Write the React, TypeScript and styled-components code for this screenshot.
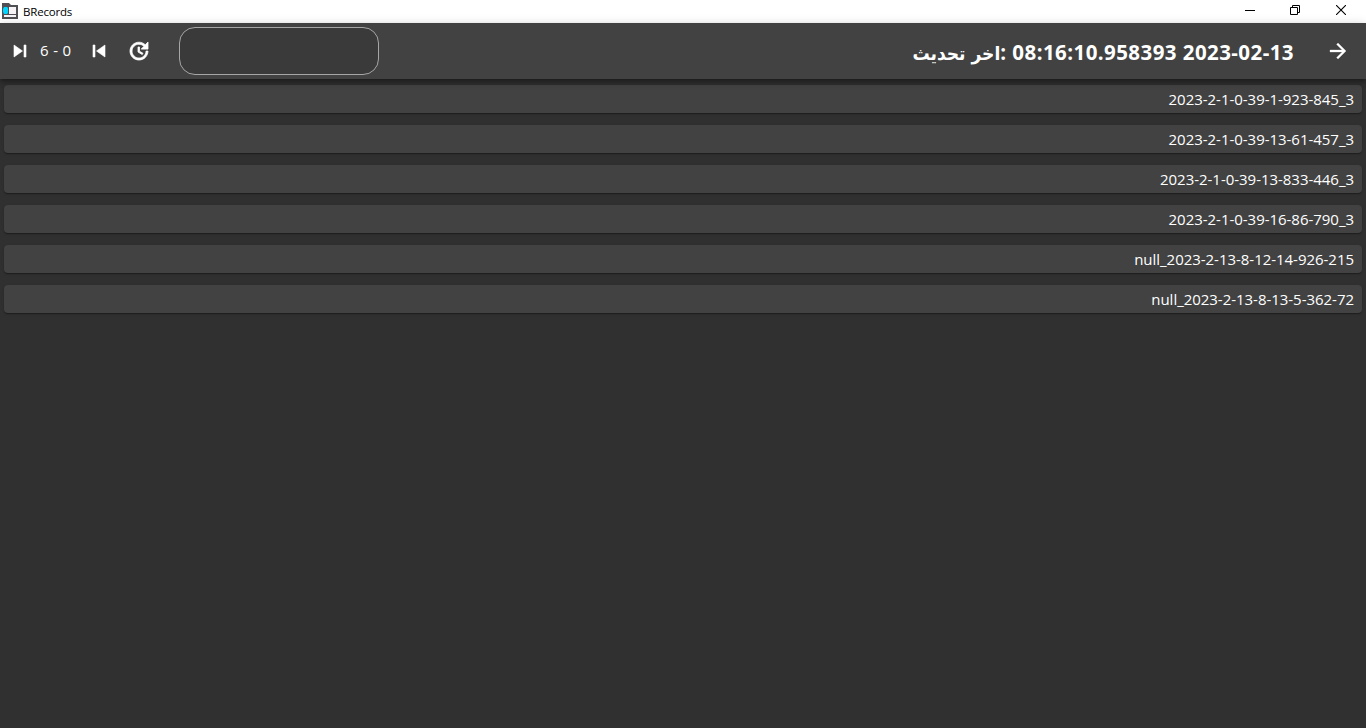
import React from "react";
import styled, { createGlobalStyle } from "styled-components";
import { MdArrowForward, MdSkipNext, MdSkipPrevious, MdUpdate } from "react-icons/md";

const GlobalStyle = createGlobalStyle`
  * { box-sizing: border-box; }
  body { margin: 0; background: #303030; overflow: hidden; }
`;

const Window = styled.div`
  display: flex;
  flex-direction: column;
  height: 100vh;
  color: #fff;
  background: #303030;
  font-family: "Open Sans", "Noto Sans", "DejaVu Sans", sans-serif;
`;

const TitleBar = styled.div`
  display: flex;
  align-items: center;
  flex: none;
  height: 23px;
  padding: 0 2px;
  background: #fff;
  color: #000;
`;

const AppIcon = styled.svg`
  display: block;
  width: 16px;
  height: 16px;
  margin-bottom: 1px;
`;

const Title = styled.span`
  flex: 1;
  margin-left: 5px;
  font-size: 11.5px;
  line-height: 23px;
  letter-spacing: -0.2px;
`;

const WindowButton = styled.button<{ $width: number }>`
  display: flex;
  align-items: center;
  justify-content: center;
  width: ${(p) => p.$width}px;
  height: 20px;
  margin: 0 0 3px;
  padding: 0;
  border: 0;
  background: none;
  color: #000;
`;

const AppBar = styled.header`
  display: flex;
  align-items: center;
  flex: none;
  height: 56px;
  padding: 0 16px 0 8px;
  background: #424242;
  box-shadow: 0 2px 4px -1px rgba(0, 0, 0, 0.3), 0 4px 5px rgba(0, 0, 0, 0.16),
    0 1px 10px rgba(0, 0, 0, 0.14);
  z-index: 1;
`;

const IconButton = styled.button<{ $gap?: number; $weight?: number }>`
  display: flex;
  width: 24px;
  height: 24px;
  margin: 0 0 0 ${(p) => p.$gap ?? 0}px;
  padding: 0;
  border: 0;
  background: none;
  color: #fff;
  font-size: 24px;

  path {
    stroke-width: ${(p) => p.$weight ?? 0};
  }

  path[fill="none"] {
    stroke: none;
  }
`;

const PageRange = styled.span`
  width: 31px;
  margin: 0 9px 3px 8px;
  font-size: 15px;
  line-height: 20px;
  word-spacing: 0.7px;
  white-space: nowrap;
`;

const SearchField = styled.input`
  width: 200px;
  height: 48px;
  margin-left: 28px;
  padding: 0 16px;
  border: 1px solid #a6a6a6;
  border-radius: 16px;
  outline: 0;
  background: #3a3a3a;
  color: #fff;
  font: inherit;
`;

const LastUpdate = styled.h1`
  display: flex;
  align-items: baseline;
  margin: 2px 32px 0 auto;
  font-size: 20.5px;
  font-weight: 700;
  line-height: 28px;
  white-space: pre;
`;

const ArabicLabel = styled.span`
  font-family: "DejaVu Sans Condensed", "DejaVu Sans", sans-serif;
  font-size: 19px;
`;

const Stamp = styled.span`
  letter-spacing: 0.43px;
`;

const Records = styled.main`
  display: flex;
  flex-direction: column;
  gap: 12px;
  padding: 6px 4px;
`;

const RecordCard = styled.div`
  height: 28px;
  padding-right: 8px;
  border-radius: 4px;
  background: #424242;
  box-shadow: 0 2px 1px -1px rgba(0, 0, 0, 0.2), 0 1px 1px rgba(0, 0, 0, 0.14),
    0 1px 3px rgba(0, 0, 0, 0.12);
  font-size: 15px;
  line-height: 28px;
  letter-spacing: -0.03px;
  text-align: right;
`;

const records = [
  "2023-2-1-0-39-1-923-845_3",
  "2023-2-1-0-39-13-61-457_3",
  "2023-2-1-0-39-13-833-446_3",
  "2023-2-1-0-39-16-86-790_3",
  "null_2023-2-13-8-12-14-926-215",
  "null_2023-2-13-8-13-5-362-72",
];

export default function App() {
  return (
    <Window>
      <GlobalStyle />
      <TitleBar>
        <AppIcon viewBox="0 0 16 16">
          <path d="M0 0h7l2 2h7v14H0z" fill="#505054" />
          <path d="M7 4h7v7H7zM2 12h12v2H2z" fill="#f5f3f5" />
          <path d="M2 4h3l1 1v5l-1 1H2L1 9V6z" fill="#00d5ff" />
        </AppIcon>
        <Title>BRecords</Title>
        <WindowButton $width={45} aria-label="Minimize">
          <svg width="10" height="10" shapeRendering="crispEdges">
            <path d="M0 5h10v1H0z" />
          </svg>
        </WindowButton>
        <WindowButton $width={45} aria-label="Restore">
          <svg width="10" height="10" fill="none" stroke="#000">
            <path d="M.5 2.5h7v7h-7zM2.5 2V.5h7v7H8" />
          </svg>
        </WindowButton>
        <WindowButton $width={47} aria-label="Close">
          <svg width="10" height="10" stroke="#000" strokeWidth="1.1">
            <path d="M0 0l10 10M10 0L0 10" />
          </svg>
        </WindowButton>
      </TitleBar>
      <AppBar>
        <IconButton $weight={0.6} aria-label="Next page"><MdSkipNext /></IconButton>
        <PageRange>6 - 0</PageRange>
        <IconButton $gap={7} $weight={0.6} aria-label="Previous page"><MdSkipPrevious /></IconButton>
        <IconButton $gap={16} $weight={0.8} aria-label="Refresh"><MdUpdate /></IconButton>
        <SearchField aria-label="Search" />
        <LastUpdate>
          <ArabicLabel>اخر تحديث</ArabicLabel>
          <Stamp>: 08:16:10.958393 2023-02-13</Stamp>
        </LastUpdate>
        <IconButton $weight={0.3} aria-label="Forward"><MdArrowForward /></IconButton>
      </AppBar>
      <Records>
        {records.map((name) => (
          <RecordCard key={name}>{name}</RecordCard>
        ))}
      </Records>
    </Window>
  );
}
